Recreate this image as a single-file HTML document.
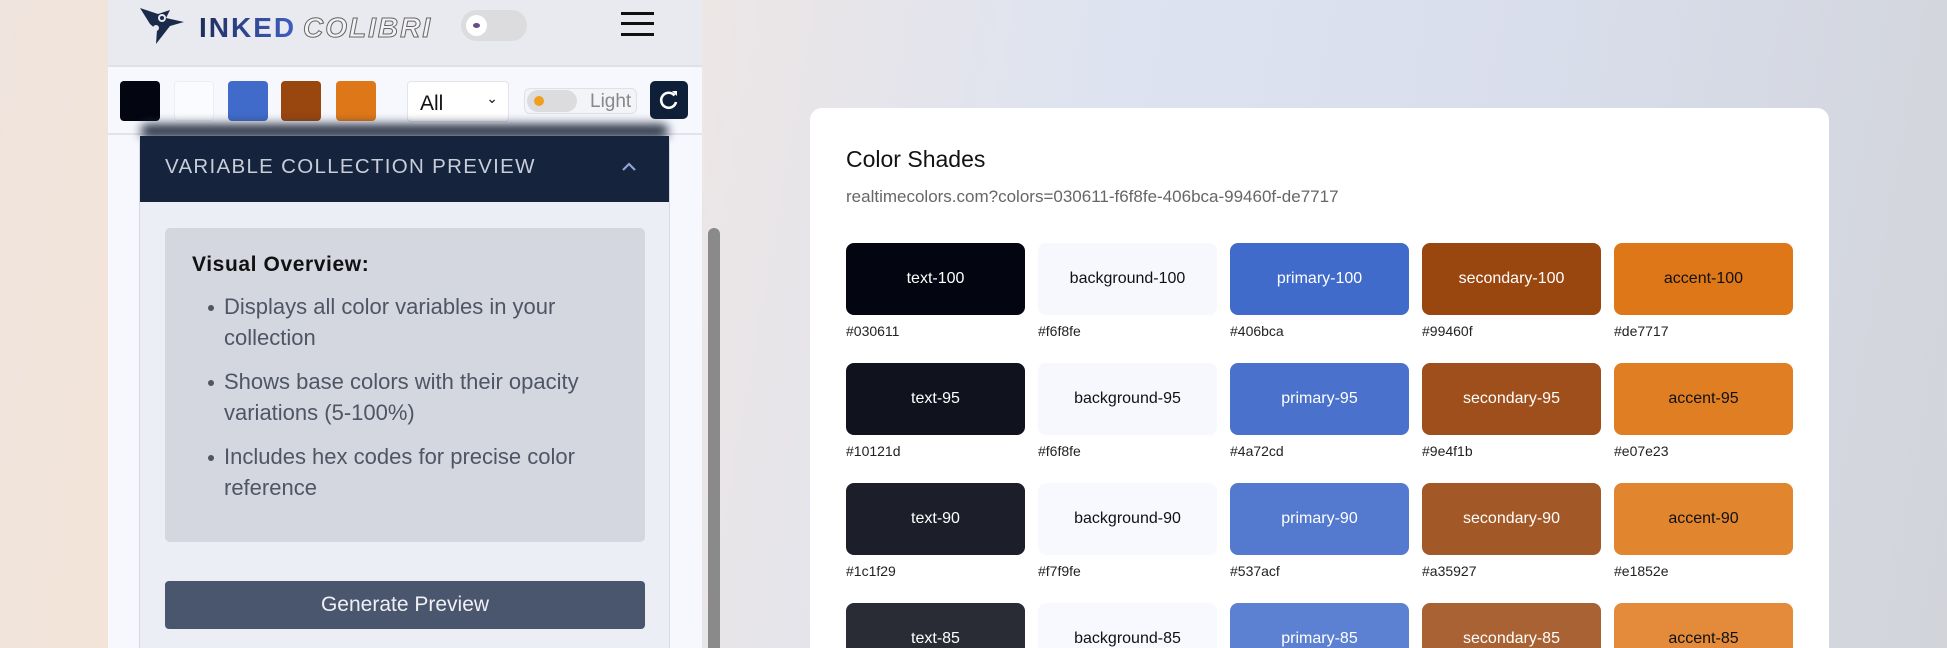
<!DOCTYPE html>
<html><head><meta charset="utf-8"><style>
*{box-sizing:border-box;margin:0;padding:0}
html{width:1947px;height:648px;overflow:hidden}
body{width:1947px;height:648px;overflow:hidden;font-family:"Liberation Sans",sans-serif;position:relative;
background:linear-gradient(100deg,#efe4de 0%,#f6e3d2 20%,#ece6e6 35%,#dde3f1 55%,#d9deec 75%,#d2d4da 100%)}
.panel{position:absolute;left:108px;top:0;width:594px;height:648px;background:#f6f8fe;overflow:hidden}
.hdr{position:absolute;left:0;top:0;width:594px;height:67px;background:#e9eaef;border-bottom:2px solid #e0e1e6}
.sw{position:absolute;top:81px;width:40px;height:40px;border-radius:4px}
.sel{position:absolute;left:299px;top:81px;width:102px;height:41px;background:#fff;border:1px solid #e3e5ea;border-radius:4px;font-size:21px;padding:10px 0 0 12px;color:#111}
.tog{position:absolute;left:416px;top:88px;width:113px;height:26px;border:1px solid #dfe1e6;border-radius:6px;background:#f3f4f7}
.ref{position:absolute;left:542px;top:81px;width:38px;height:38px;background:#0f1f38;border-radius:5px}
.acc{position:absolute;left:31px;top:136px;width:531px;height:520px;background:#eceef5;border-left:1px solid #d7dae2;border-right:1px solid #d7dae2}
.acch{height:66px;background:#15233d;color:#c9cdd8;font-size:20.5px;letter-spacing:1.3px;padding:19px 0 0 25px;position:relative}
.box{position:absolute;left:25px;top:92px;width:480px;height:314px;background:#d4d7e0;border-radius:5px}
.box h3{position:absolute;left:27px;top:25px;font-size:21px;color:#111;letter-spacing:.6px}
.box ul{position:absolute;left:59px;top:63px;width:375px;font-size:22px;line-height:31px;color:#4f5564;list-style:none}
.box li{position:relative;margin-bottom:13px}
.box li:before{content:"";position:absolute;left:-16px;top:14px;width:6px;height:6px;border-radius:50%;background:#4f5564}
.btn{position:absolute;left:25px;top:445px;width:480px;height:48px;background:#4a566e;border-radius:4px;color:#eef0f5;font-size:21px;text-align:center;line-height:48px}
.scroll{position:absolute;left:708px;top:228px;width:12px;height:430px;background:#8a8a8a;border-radius:6px}
.card{position:absolute;left:810px;top:108px;width:1019px;height:560px;background:#fff;border-radius:12px}
.card h2{position:absolute;left:36px;top:38px;font-weight:normal;font-size:23px;color:#111}
.card .url{position:absolute;left:36px;top:79px;font-size:17px;color:#666}
.c{position:absolute;width:179px;height:72px;border-radius:8px;font-size:16px;text-align:center;line-height:72px}
.hx{position:absolute;font-size:14px;color:#222}
</style></head><body>
<div class="panel">
 <div class="hdr">
  <svg style="position:absolute;left:32px;top:6px" width="46" height="40" viewBox="0 0 46 40">
   <path d="M0 2 L18 8 L30 4 L26 12 L44 16 L30 20 L16 38 L17 24 L10 18 Z" fill="#1a2a4a"/>
   <circle cx="22" cy="12" r="4" fill="#e8e9ee"/><circle cx="22" cy="12" r="2" fill="#1a2a4a"/>
   <circle cx="16" cy="22" r="3" fill="#e8e9ee"/>
  </svg>
  <div style="position:absolute;left:91px;top:12px;font-size:28px;font-weight:bold;letter-spacing:2px;background:linear-gradient(90deg,#1f2d5a,#3f5fc4);-webkit-background-clip:text;color:transparent">INKED</div>
  <div style="position:absolute;left:195px;top:12px;font-size:28px;font-weight:bold;font-style:italic;letter-spacing:2px;color:#f2f2f4;-webkit-text-stroke:1px #666">COLIBRI</div>
  <div style="position:absolute;left:353px;top:10px;width:66px;height:31px;border-radius:16px;background:#dcdcdf"><div style="position:absolute;left:5px;top:5px;width:21px;height:21px;border-radius:50%;background:#fff"></div><div style="position:absolute;left:12px;top:13px;width:7px;height:5px;border-radius:50%;background:#6b4a8a"></div></div>
  <div style="position:absolute;left:513px;top:12px;width:33px;height:3px;background:#111;box-shadow:0 10px 0 #111,0 21px 0 #111"></div>
 </div>
 <div class="sw" style="left:12px;background:#030611"></div>
 <div class="sw" style="left:66px;background:#fafbfe;border:1px solid #eceef3"></div>
 <div class="sw" style="left:120px;background:#406bca"></div>
 <div class="sw" style="left:173px;background:#99460f"></div>
 <div class="sw" style="left:228px;background:#de7717"></div>
 <div class="sel">All<span style="position:absolute;right:10px;top:8px;font-size:14px">&#8964;</span></div>
 <div class="tog"><div style="position:absolute;left:2px;top:1px;width:50px;height:22px;border-radius:11px;background:#dcdcdf"></div><div style="position:absolute;left:9px;top:7px;width:10px;height:10px;border-radius:50%;background:#f0a020"></div><span style="position:absolute;left:65px;top:2px;font-size:19px;color:#888">Light</span></div>
 <div class="ref"><svg width="38" height="38" viewBox="0 0 38 38"><path d="M24.5 14.5 A7.5 7.5 0 1 0 26 21" fill="none" stroke="#fff" stroke-width="2.6"/><path d="M22 10 L27 10 L27 15 Z" fill="#fff"/></svg></div>
 <div style="position:absolute;left:0;top:133px;width:594px;height:2px;background:#e2e4ea"></div>
 <div style="position:absolute;left:33px;top:124px;width:527px;height:14px;background:#2a3345;filter:blur(5px);border-radius:6px"></div>
 <div class="acc">
  <div class="acch">VARIABLE COLLECTION PREVIEW<svg style="position:absolute;left:481px;top:25px" width="16" height="12" viewBox="0 0 16 12"><path d="M2 9 L8 3 L14 9" fill="none" stroke="#8fa3d8" stroke-width="2.2"/></svg></div>
  <div class="box"><h3>Visual Overview:</h3>
   <ul><li>Displays all color variables in your collection</li><li>Shows base colors with their opacity variations (5-100%)</li><li>Includes hex codes for precise color reference</li></ul></div>
  <div class="btn">Generate Preview</div>
 </div>
</div>
<div class="scroll"></div>
<div class="card">
 <h2>Color Shades</h2>
 <div class="url">realtimecolors.com?colors=030611-f6f8fe-406bca-99460f-de7717</div>
</div>
<div style="position:absolute;left:810px;top:108px">
<div class="c" style="left:36px;top:135px;background:#030611;color:#fff">text-100</div>
<div class="c" style="left:228px;top:135px;background:#f6f8fe;color:#111">background-100</div>
<div class="c" style="left:420px;top:135px;background:#406bca;color:#fff">primary-100</div>
<div class="c" style="left:612px;top:135px;background:#99460f;color:#fff">secondary-100</div>
<div class="c" style="left:804px;top:135px;background:#de7717;color:#111">accent-100</div>
<div class="hx" style="left:36px;top:215px">#030611</div><div class="hx" style="left:228px;top:215px">#f6f8fe</div><div class="hx" style="left:420px;top:215px">#406bca</div><div class="hx" style="left:612px;top:215px">#99460f</div><div class="hx" style="left:804px;top:215px">#de7717</div>
<div class="c" style="left:36px;top:255px;background:#10121d;color:#fff">text-95</div>
<div class="c" style="left:228px;top:255px;background:#f6f8fe;color:#111">background-95</div>
<div class="c" style="left:420px;top:255px;background:#4a72cd;color:#fff">primary-95</div>
<div class="c" style="left:612px;top:255px;background:#9e4f1b;color:#fff">secondary-95</div>
<div class="c" style="left:804px;top:255px;background:#e07e23;color:#111">accent-95</div>
<div class="hx" style="left:36px;top:335px">#10121d</div><div class="hx" style="left:228px;top:335px">#f6f8fe</div><div class="hx" style="left:420px;top:335px">#4a72cd</div><div class="hx" style="left:612px;top:335px">#9e4f1b</div><div class="hx" style="left:804px;top:335px">#e07e23</div>
<div class="c" style="left:36px;top:375px;background:#1c1f29;color:#fff">text-90</div>
<div class="c" style="left:228px;top:375px;background:#f7f9fe;color:#111">background-90</div>
<div class="c" style="left:420px;top:375px;background:#537acf;color:#fff">primary-90</div>
<div class="c" style="left:612px;top:375px;background:#a35927;color:#fff">secondary-90</div>
<div class="c" style="left:804px;top:375px;background:#e1852e;color:#111">accent-90</div>
<div class="hx" style="left:36px;top:455px">#1c1f29</div><div class="hx" style="left:228px;top:455px">#f7f9fe</div><div class="hx" style="left:420px;top:455px">#537acf</div><div class="hx" style="left:612px;top:455px">#a35927</div><div class="hx" style="left:804px;top:455px">#e1852e</div>
<div class="c" style="left:36px;top:495px;background:#292c35;color:#fff">text-85</div>
<div class="c" style="left:228px;top:495px;background:#f7f9fe;color:#111">background-85</div>
<div class="c" style="left:420px;top:495px;background:#5d81d2;color:#fff">primary-85</div>
<div class="c" style="left:612px;top:495px;background:#a86233;color:#fff">secondary-85</div>
<div class="c" style="left:804px;top:495px;background:#e38b3a;color:#111">accent-85</div>
</div>
</body></html>
